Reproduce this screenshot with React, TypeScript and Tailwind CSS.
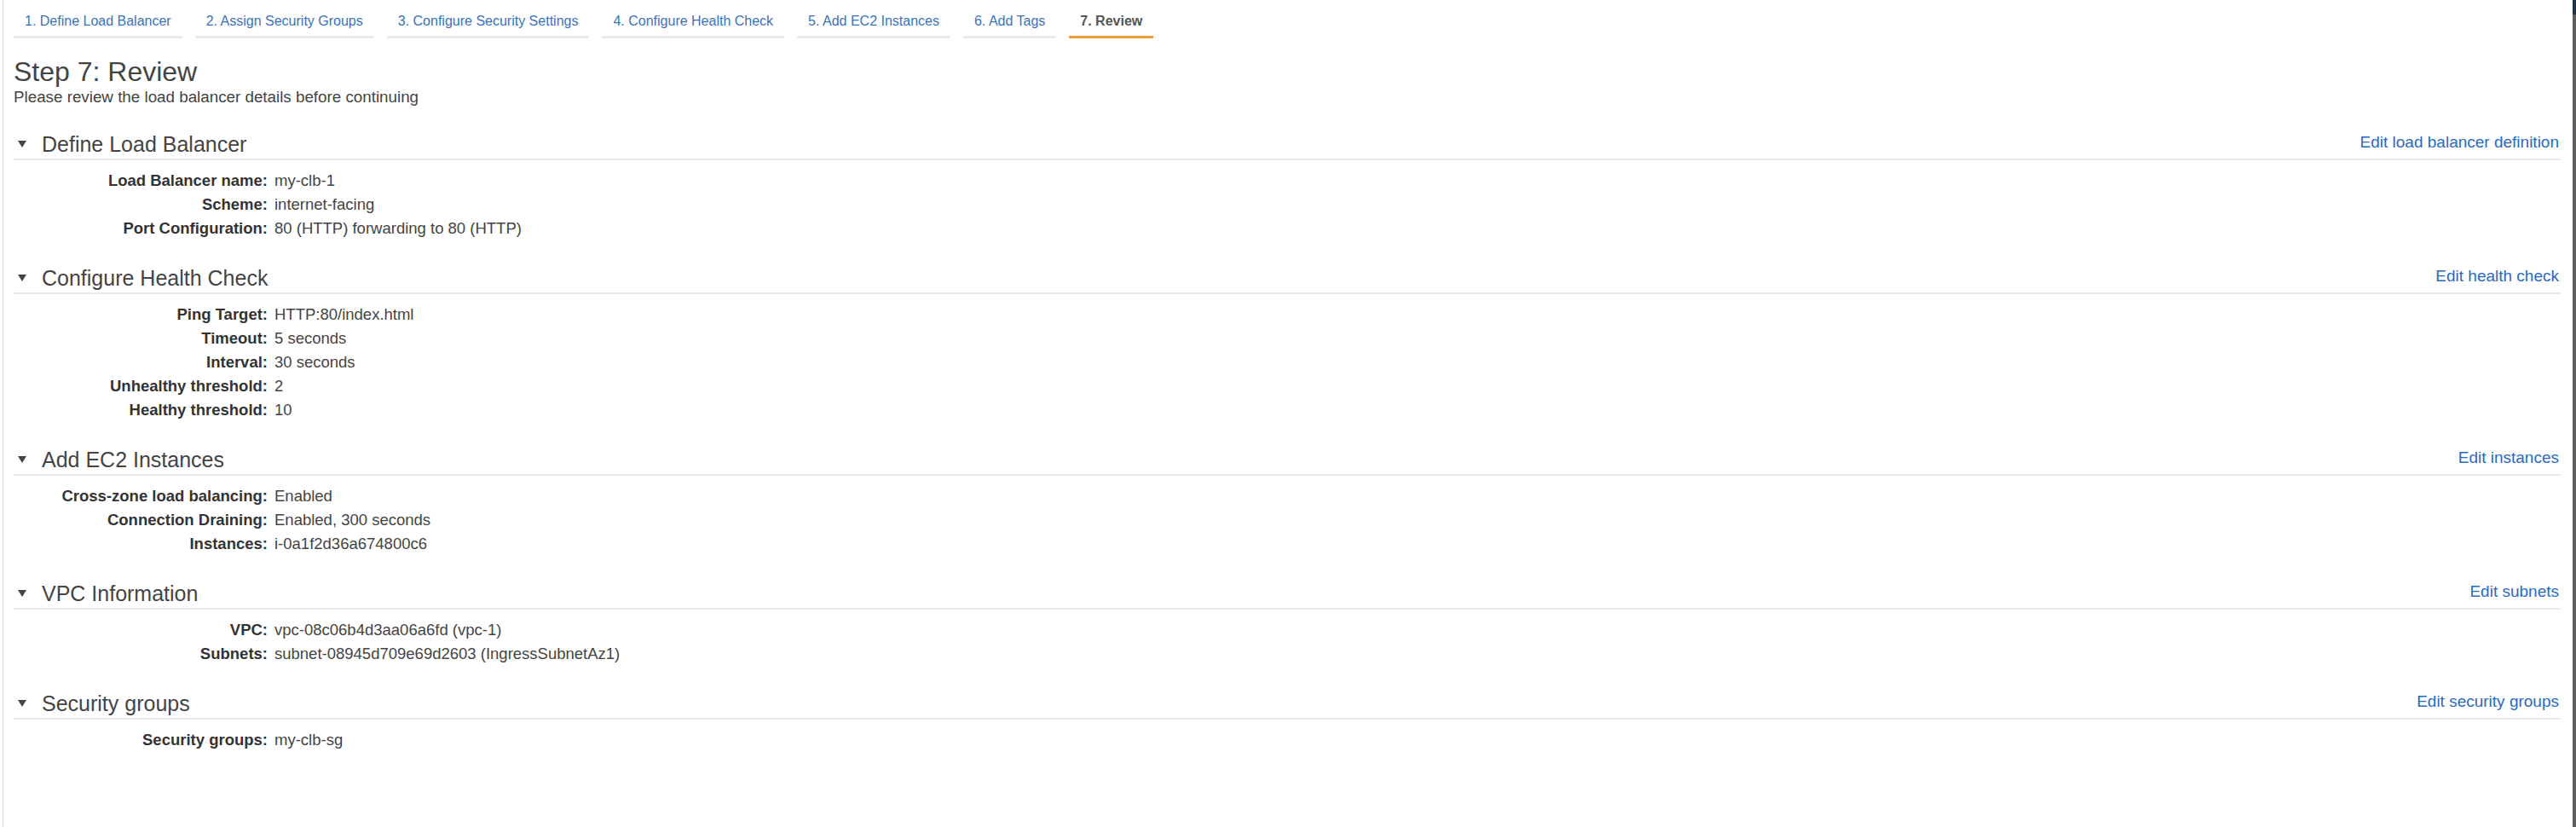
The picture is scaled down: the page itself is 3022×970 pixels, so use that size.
const tabs = [
  '1. Define Load Balancer',
  '2. Assign Security Groups',
  '3. Configure Security Settings',
  '4. Configure Health Check',
  '5. Add EC2 Instances',
  '6. Add Tags',
  '7. Review',
];

type Section = {
  title: string;
  edit: string;
  rows: [string, string][];
};

const sections: Section[] = [
  {
    title: 'Define Load Balancer',
    edit: 'Edit load balancer definition',
    rows: [
      ['Load Balancer name:', 'my-clb-1'],
      ['Scheme:', 'internet-facing'],
      ['Port Configuration:', '80 (HTTP) forwarding to 80 (HTTP)'],
    ],
  },
  {
    title: 'Configure Health Check',
    edit: 'Edit health check',
    rows: [
      ['Ping Target:', 'HTTP:80/index.html'],
      ['Timeout:', '5 seconds'],
      ['Interval:', '30 seconds'],
      ['Unhealthy threshold:', '2'],
      ['Healthy threshold:', '10'],
    ],
  },
  {
    title: 'Add EC2 Instances',
    edit: 'Edit instances',
    rows: [
      ['Cross-zone load balancing:', 'Enabled'],
      ['Connection Draining:', 'Enabled, 300 seconds'],
      ['Instances:', 'i-0a1f2d36a674800c6'],
    ],
  },
  {
    title: 'VPC Information',
    edit: 'Edit subnets',
    rows: [
      ['VPC:', 'vpc-08c06b4d3aa06a6fd (vpc-1)'],
      ['Subnets:', 'subnet-08945d709e69d2603 (IngressSubnetAz1)'],
    ],
  },
  {
    title: 'Security groups',
    edit: 'Edit security groups',
    rows: [['Security groups:', 'my-clb-sg']],
  },
];

function ReviewSection({ section }: { section: Section }) {
  return (
    <section className="mt-[27px] first:mt-[30px]">
      {/* Section header */}
      <div className="flex items-baseline justify-between border-b-2 border-[#eaeaea] pb-[2px]">
        <div className="flex items-center">
          <svg width="10" height="8" viewBox="0 0 10 8" className="ml-[5px] mr-[18px] fill-[#444]">
            <polygon points="0,0 10,0 5,8" />
          </svg>
          <h2 className="text-[25px] leading-[30px] text-[#444]">{section.title}</h2>
        </div>
        <a className="pr-[2px] text-[19px] leading-[30px] text-[#2a6ac0]">{section.edit}</a>
      </div>

      {/* Key / value rows */}
      <dl className="mt-[10px]">
        {section.rows.map(([label, value]) => (
          <div key={label} className="flex h-[28px] items-center text-[18.5px] leading-[28px]">
            <dt className="w-[298px] shrink-0 text-right font-bold text-[#333]">{label}</dt>
            <dd className="ml-[8px] text-[#444]">{value}</dd>
          </div>
        ))}
      </dl>
    </section>
  );
}

export default function App() {
  return (
    <div className="flex h-[970px] w-full bg-white font-['Liberation_Sans',Arial,sans-serif]">
      <main className="ml-[3px] flex-1 border-l border-[#d5d9dc] pl-[12px] pr-[14px]">
        {/* Wizard tabs */}
        <nav className="flex gap-[15px] pt-[15px]">
          {tabs.map((tab, i) => {
            const active = i === tabs.length - 1;
            return (
              <div
                key={tab}
                className={
                  active
                    ? 'border-b-[3px] border-[#ec9a3c] px-[13px] pb-[7px] text-[16px] font-bold leading-[20px] text-[#555]'
                    : 'border-b-[3px] border-[#eaeaea] px-[13px] pb-[7px] text-[16px] leading-[20px] text-[#3a72ba]'
                }
              >
                {tab}
              </div>
            );
          })}
        </nav>

        {/* Title */}
        <h1 className="mt-[21px] text-[32px] leading-[36px] text-[#444]">Step 7: Review</h1>
        <p className="mt-[1px] text-[18.8px] leading-[22px] text-[#444]">
          Please review the load balancer details before continuing
        </p>

        {sections.map((s) => (
          <ReviewSection key={s.title} section={s} />
        ))}
      </main>

      {/* Right window edge */}
      <div className="flex w-[4px] flex-col">
        <div className="h-[17px] bg-[#22344a]" />
        <div className="flex-1 bg-[#5e5e5e]" />
      </div>
    </div>
  );
}
